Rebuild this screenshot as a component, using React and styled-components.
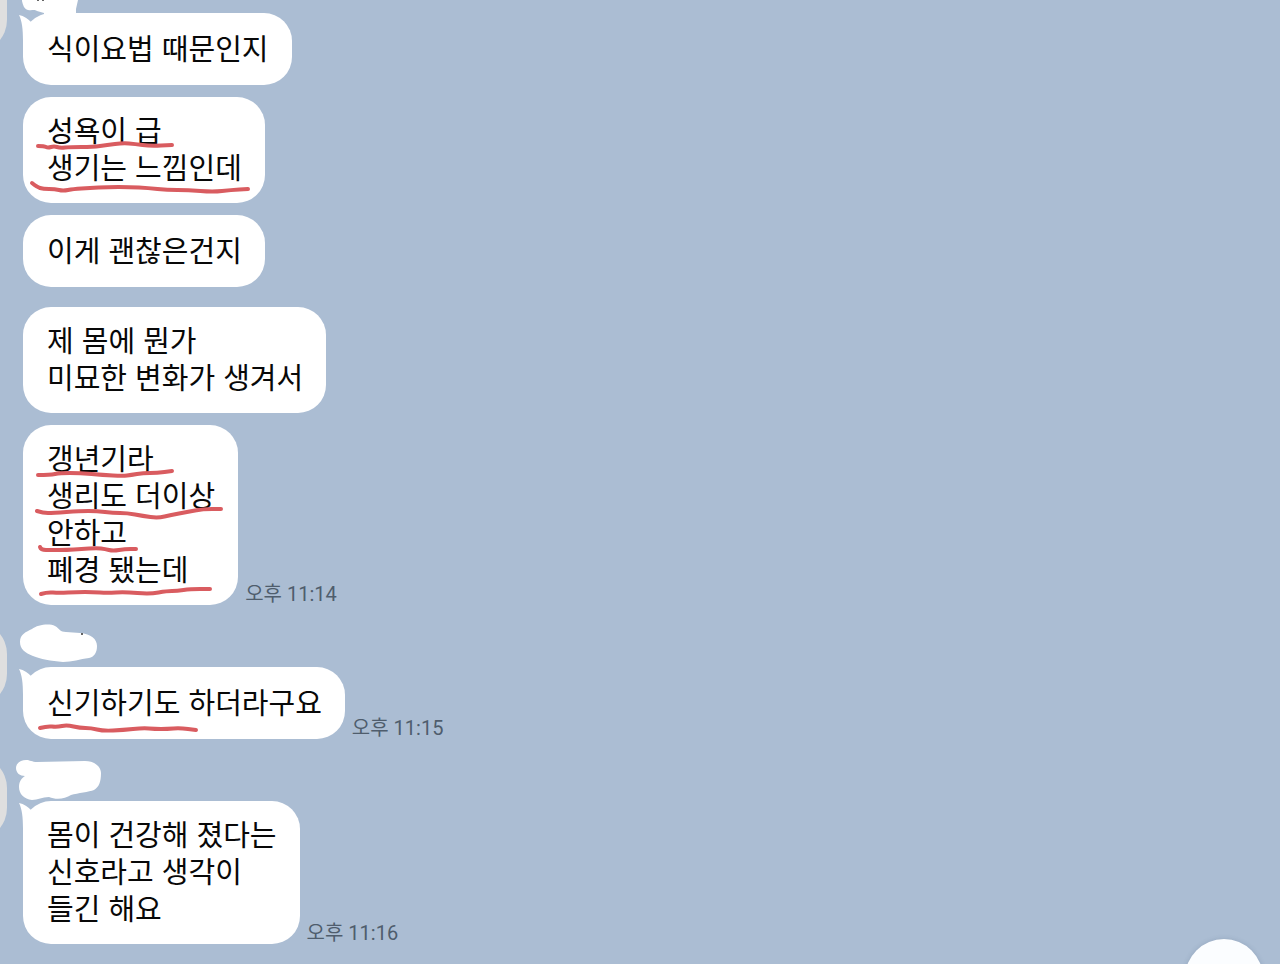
import React from 'react';
import styled, { createGlobalStyle } from 'styled-components';

const GlobalStyle = createGlobalStyle`
    body {
        margin: 0;
        background-color: #abbdd3;
        font-family: Roboto, "Noto Sans CJK KR", sans-serif;
    }
`;

const Room = styled.main`
    box-sizing: border-box;
    min-height: 100vh;
    overflow: hidden;
    padding-bottom: 20px;
`;

const Feed = styled.div`
    display: flex;
    flex-direction: column;
    gap: 17px;
    margin-top: -32px;
`;

const Group = styled.section`
    display: flex;
    align-items: flex-start;
    gap: 16px;
`;

const Avatar = styled.div`
    flex: none;
    width: 84px;
    height: 84px;
    margin-left: -77px;
    border-radius: 32px;
    background-color: #dfdfdf;
`;

const Messages = styled.div`
    display: flex;
    flex-direction: column;
    gap: 12px;
    min-width: 0;
`;

const NameCover = styled.svg`
    display: block;
    width: 90px;
    height: 45px;
    margin: 0 0 -12px -8px;
    overflow: visible;
    fill: #fff;
`;

const Row = styled.div`
    display: flex;
    align-items: flex-end;
    gap: 7px;
    margin-top: ${({ $spaced }) => ($spaced ? '8px' : '0')};
`;

const Bubble = styled.div`
    position: relative;
    display: flex;
    align-items: center;
    box-sizing: border-box;
    min-height: 72px;
    padding: 17px 23px 15px 24px;
    border-radius: 28px;
    background-color: #fff;
`;

const Text = styled.p`
    margin: 0;
    color: #080808;
    font-family: "Liberation Sans", "Noto Sans CJK KR", sans-serif;
    font-size: 29px;
    line-height: 37px;
    white-space: pre-line;
`;

const Time = styled.time`
    color: #4f5d6d;
    font-size: 20px;
    line-height: 22px;
    white-space: nowrap;
`;

const Tail = styled.svg`
    position: absolute;
    top: 0;
    left: -4px;
    width: 24px;
    height: 28px;
    fill: #fff;
`;

const Marks = styled.svg`
    position: absolute;
    top: 0;
    left: 0;
    width: 100%;
    height: 100%;
    overflow: visible;
    pointer-events: none;
    fill: none;
    stroke: #d95c60;
    stroke-width: 4;
    stroke-linecap: round;
    stroke-linejoin: round;
`;

const ScrollButton = styled.button`
    position: fixed;
    right: 17px;
    bottom: -53px;
    width: 78px;
    height: 78px;
    padding: 0;
    border: 0;
    border-radius: 50%;
    background-color: #fbfdff;
    box-shadow: 0 0 5px rgba(60, 80, 110, .2);
    cursor: pointer;
`;

const groups = [
    {
        cover: 'M7 20 L7 33 C8 37 9 41 13 42 C17 43 19 41 22 43 L29 45 L29 47 L61 47 L61 41 L63 32 L63 20 Z',
        specks: [[23, 32], [28, 32]],
        messages: [
            { text: '식이요법 때문인지' },
            {
                text: '성욕이 급\n생기는 느낌인데',
                marks: [
                    [[15, 49], [21, 49], [25, 51], [31, 49], [37, 51], [47, 50], [70, 50], [84, 48], [100, 46], [112, 47], [127, 49], [149, 48]],
                    [[9, 86], [14, 90], [20, 92], [32, 92], [40, 94], [50, 92], [67, 91], [84, 90], [107, 90], [125, 91], [144, 93], [165, 93], [190, 95], [208, 93], [225, 92]],
                ],
            },
            { text: '이게 괜찮은건지' },
            { text: '제 몸에 뭔가\n미묘한 변화가 생겨서', spaced: true },
            {
                text: '갱년기라\n생리도 더이상\n안하고\n폐경 됐는데',
                time: '오후 11:14',
                marks: [
                    [[15, 50], [27, 50], [37, 48], [57, 48], [80, 50], [100, 51], [108, 50], [120, 48], [134, 48], [149, 46]],
                    [[14, 86], [20, 88], [30, 88], [57, 86], [74, 86], [90, 88], [104, 88], [120, 91], [135, 93], [148, 90], [164, 87], [180, 84], [198, 84]],
                    [[17, 122], [18, 125], [28, 125], [44, 125], [58, 124], [74, 123], [82, 124], [90, 126], [102, 124], [113, 124]],
                    [[18, 169], [24, 167], [36, 168], [54, 167], [70, 167], [84, 168], [102, 167], [127, 169], [144, 166], [154, 166], [167, 164], [187, 164]],
                ],
            },
        ],
    },
    {
        cover: 'M5 20 C5 12 11 10 17 7 C22 3 34 1 40 4 C45 7 45 10 51 10 L65 11 C76 12 82 17 82 24 C82 31 79 35 74 36 C65 37 57 40 48 40 C36 39 25 37 18 34 C10 31 5 27 5 20 Z',
        specks: [[67, 12]],
        messages: [
            {
                text: '신기하기도 하더라구요',
                time: '오후 11:15',
                marks: [
                    [[17, 61], [24, 59], [34, 60], [44, 58], [57, 61], [68, 61], [80, 64], [100, 63], [120, 61], [132, 62], [144, 62], [157, 61], [173, 63]],
                ],
            },
        ],
    },
    {
        cover: 'M1 12 C1 7 6 4 11 4 C15 4 17 6 22 6 L70 5 C80 5 86 11 86 17 C86 26 84 31 79 34 C74 36 63 37 56 39 C50 43 41 44 34 41 C27 41 23 44 17 44 C9 43 4 38 4 31 C4 25 7 22 10 20 C5 20 1 17 1 12 Z',
        messages: [
            { text: '몸이 건강해 졌다는\n신호라고 생각이\n들긴 해요', time: '오후 11:16' },
        ],
    },
];

// smooth stroke through the middle of each pair of points
const strokePath = (points) => {
    let d = `M${points[0].join(' ')}`;
    for (let i = 1; i < points.length - 1; i += 1) {
        const [x, y] = points[i];
        const [nx, ny] = points[i + 1];
        d += ` Q${x} ${y} ${(x + nx) / 2} ${(y + ny) / 2}`;
    }
    return `${d} L${points[points.length - 1].join(' ')}`;
};

const Message = ({ text, time, marks, spaced, first }) => (
    <Row $spaced={spaced}>
        <Bubble>
            {first && (
                <Tail viewBox="0 0 24 28" aria-hidden="true">
                    <path d="M0 2 C5 3 9 6 12 9 L20 22 L4 28 C4 16 3 8 0 2 Z" />
                </Tail>
            )}
            <Text>{text}</Text>
            {marks && (
                <Marks aria-hidden="true">
                    {marks.map((points) => <path key={points.join()} d={strokePath(points)} />)}
                </Marks>
            )}
        </Bubble>
        {time && <Time>{time}</Time>}
    </Row>
);

const App = () => (
    <>
        <GlobalStyle />
        <Room>
            <Feed>
                {groups.map(({ cover, specks = [], messages }) => (
                    <Group key={cover}>
                        <Avatar />
                        <Messages>
                            <NameCover viewBox="0 0 90 45" aria-hidden="true">
                                <path d={cover} />
                                {specks.map(([x, y]) => <circle key={x} cx={x} cy={y} r="1" fill="#333" />)}
                            </NameCover>
                            {messages.map((message, i) => (
                                <Message key={message.text} first={i === 0} {...message} />
                            ))}
                        </Messages>
                    </Group>
                ))}
            </Feed>
            <ScrollButton type="button" aria-label="맨 아래로" />
        </Room>
    </>
);

export default App;
